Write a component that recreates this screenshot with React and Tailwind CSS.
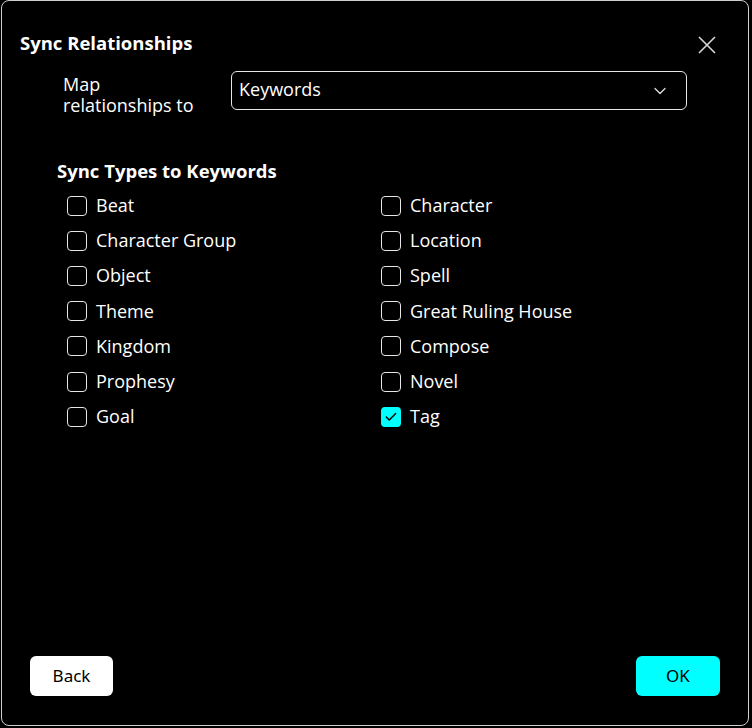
import { ChevronDown, Check } from 'lucide-react';

const left = ['Beat', 'Character Group', 'Object', 'Theme', 'Kingdom', 'Prophesy', 'Goal'];
const right = ['Character', 'Location', 'Spell', 'Great Ruling House', 'Compose', 'Novel', 'Tag'];

function Box({ label, checked }) {
  return (
    <div className="flex items-center h-[35.2px]">
      {checked ? (
        <span className="w-[20px] h-[20px] rounded-[4px] bg-[#00ffff] flex items-center justify-center">
          <Check size={14} strokeWidth={2.5} className="text-black" />
        </span>
      ) : (
        <span className="w-[20px] h-[20px] rounded-[4px] border-[1.5px] border-[#e6e6e6]" />
      )}
      <span className="ml-[9px] text-[18px] text-white">{label}</span>
    </div>
  );
}

export default function App() {
  const rows = left.map((l, i) => [l, right[i]]);
  return (
    <div className="w-[752px] h-[728px] bg-black" style={{ fontFamily: '"Open Sans", "Noto Sans", sans-serif' }}>
      <div className="ml-[1px] w-[748px] h-[726px] border border-[#cfcfcf] rounded-[8px] flex flex-col">
        <div className="flex items-start justify-between pl-[18px] pr-[32px] pt-[30px]">
          <h1 className="text-[18.5px] font-bold text-white leading-[24px]">Sync Relationships</h1>
          <svg width="18" height="18" viewBox="0 0 18 18" className="mt-[5px]">
            <path d="M1 1L17 17M17 1L1 17" stroke="#d8d8d8" strokeWidth="1.6" fill="none" />
          </svg>
        </div>

        <div className="flex items-start pl-[61px] pr-[61px] mt-[16px]">
          <div className="w-[168px] text-[18px] leading-[21px] text-white pt-[3px]">
            Map<br />relationships to
          </div>
          <div className="flex-1 h-[39px] border border-[#e6e6e6] rounded-[6px] flex items-center justify-between pl-[7px] pr-[16px]">
            <span className="text-[18px] text-white -mt-[3px]">Keywords</span>
            <ChevronDown size={20} strokeWidth={1.5} className="text-[#e0e0e0]" />
          </div>
        </div>

        <div className="pl-[55px] mt-[43px]">
          <h2 className="text-[18.5px] font-bold text-white leading-[24px]">Sync Types to Keywords</h2>
          <div className="grid grid-cols-[314px_1fr] pl-[10px] mt-[5px]">
            {rows.map(([l, r]) => (
              <div key={l} className="contents">
                <Box label={l} />
                <Box label={r} checked={r === 'Tag'} />
              </div>
            ))}
          </div>
        </div>

        <div className="flex-1" />

        <div className="flex justify-between pl-[28px] pr-[28px] pb-[29px]">
          <button className="w-[83px] h-[40px] rounded-[6px] bg-white text-black text-[17px]" style={{ fontFamily: '"Noto Sans", sans-serif' }}>Back</button>
          <button className="w-[84px] h-[40px] rounded-[6px] bg-[#00ffff] text-black text-[17px]" style={{ fontFamily: '"Noto Sans", sans-serif' }}>OK</button>
        </div>
      </div>
    </div>
  );
}
